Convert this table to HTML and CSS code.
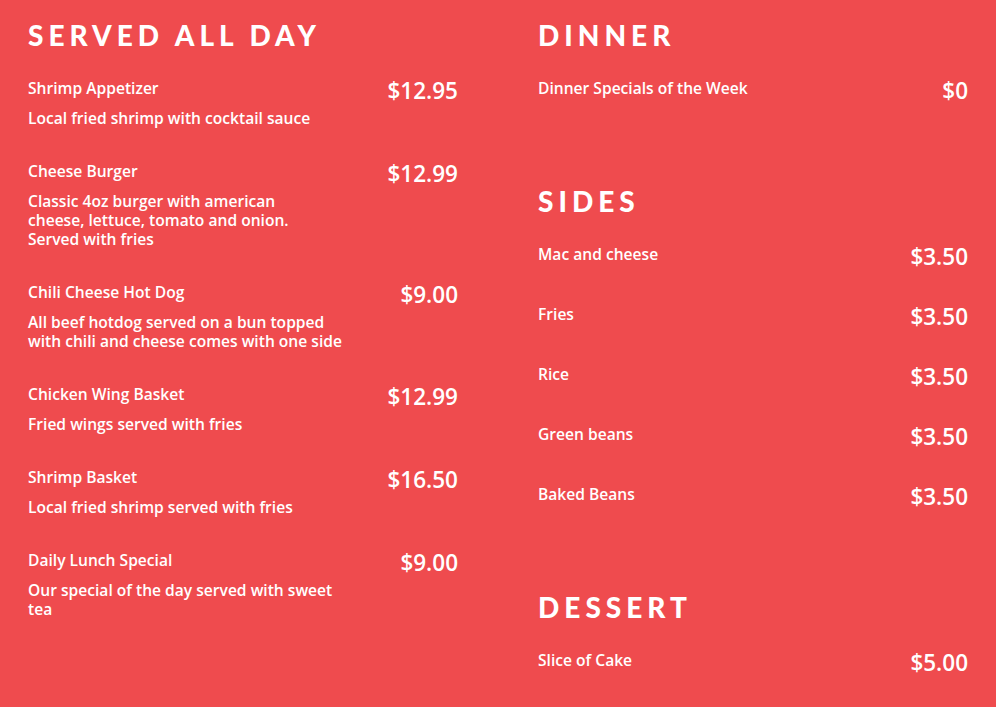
FILE: index.html
```html
<!DOCTYPE html>
<html>
<head>
<meta charset="utf-8">
<link rel="stylesheet" href="styles.css">
</head>
<body>
<main class="menu">
  <div class="col">
    <section class="section">
      <h2 class="heading">Served All Day</h2>
      <div class="items">
        <div class="item">
          <div class="info"><div class="name">Shrimp Appetizer</div><p class="desc">Local fried shrimp with cocktail sauce</p></div>
          <div class="price">$12.95</div>
        </div>
        <div class="item">
          <div class="info info-narrow"><div class="name">Cheese Burger</div><p class="desc">Classic 4oz burger with american cheese, lettuce, tomato and onion. Served with fries</p></div>
          <div class="price">$12.99</div>
        </div>
        <div class="item">
          <div class="info"><div class="name">Chili Cheese Hot Dog</div><p class="desc">All beef hotdog served on a bun topped with chili and cheese comes with one side</p></div>
          <div class="price">$9.00</div>
        </div>
        <div class="item">
          <div class="info"><div class="name">Chicken Wing Basket</div><p class="desc">Fried wings served with fries</p></div>
          <div class="price">$12.99</div>
        </div>
        <div class="item">
          <div class="info"><div class="name">Shrimp Basket</div><p class="desc">Local fried shrimp served with fries</p></div>
          <div class="price">$16.50</div>
        </div>
        <div class="item">
          <div class="info"><div class="name">Daily Lunch Special</div><p class="desc">Our special of the day served with sweet tea</p></div>
          <div class="price">$9.00</div>
        </div>
      </div>
    </section>
  </div>
  <div class="col">
    <section class="section">
      <h2 class="heading">Dinner</h2>
      <div class="items">
        <div class="item">
          <div class="info"><div class="name">Dinner Specials of the Week</div></div>
          <div class="price">$0</div>
        </div>
      </div>
    </section>
    <section class="section">
      <h2 class="heading">Sides</h2>
      <div class="items">
        <div class="item"><div class="info"><div class="name">Mac and cheese</div></div><div class="price">$3.50</div></div>
        <div class="item"><div class="info"><div class="name">Fries</div></div><div class="price">$3.50</div></div>
        <div class="item"><div class="info"><div class="name">Rice</div></div><div class="price">$3.50</div></div>
        <div class="item"><div class="info"><div class="name">Green beans</div></div><div class="price">$3.50</div></div>
        <div class="item"><div class="info"><div class="name">Baked Beans</div></div><div class="price">$3.50</div></div>
      </div>
    </section>
    <section class="section">
      <h2 class="heading">Dessert</h2>
      <div class="items">
        <div class="item"><div class="info"><div class="name">Slice of Cake</div></div><div class="price">$5.00</div></div>
      </div>
    </section>
  </div>
</main>
</body>
</html>
```

FILE: styles.css
```css
html, body {
  margin: 0;
  padding: 0;
  background: #ef4b4e;
}
body {
  color: #fff;
  font-family: "Open Sans", sans-serif;
}
.menu {
  display: grid;
  grid-template-columns: 430px 430px;
  column-gap: 80px;
  padding: 18px 28px 0;
}
.col {
  display: flex;
  flex-direction: column;
  gap: 79px;
}
.heading {
  margin: 0 0 26px;
  font-family: "Lato", sans-serif;
  font-weight: 900;
  font-size: 28px;
  line-height: 34px;
  letter-spacing: 5px;
  text-transform: uppercase;
}
.items {
  display: flex;
  flex-direction: column;
  gap: 33px;
}
.item {
  display: flex;
  justify-content: space-between;
  align-items: flex-start;
  min-height: 27px;
}
.info {
  max-width: 316px;
}
.info-narrow {
  max-width: 298px;
}
.name {
  font-size: 15.6px;
  font-weight: 600;
  line-height: 20px;
}
.desc {
  margin: 11px 0 0;
  font-size: 15.6px;
  font-weight: 600;
  line-height: 19px;
}
.price {
  font-family: "Open Sans", sans-serif;
  font-size: 22.5px;
  font-weight: 600;
  line-height: 26px;
}
```
